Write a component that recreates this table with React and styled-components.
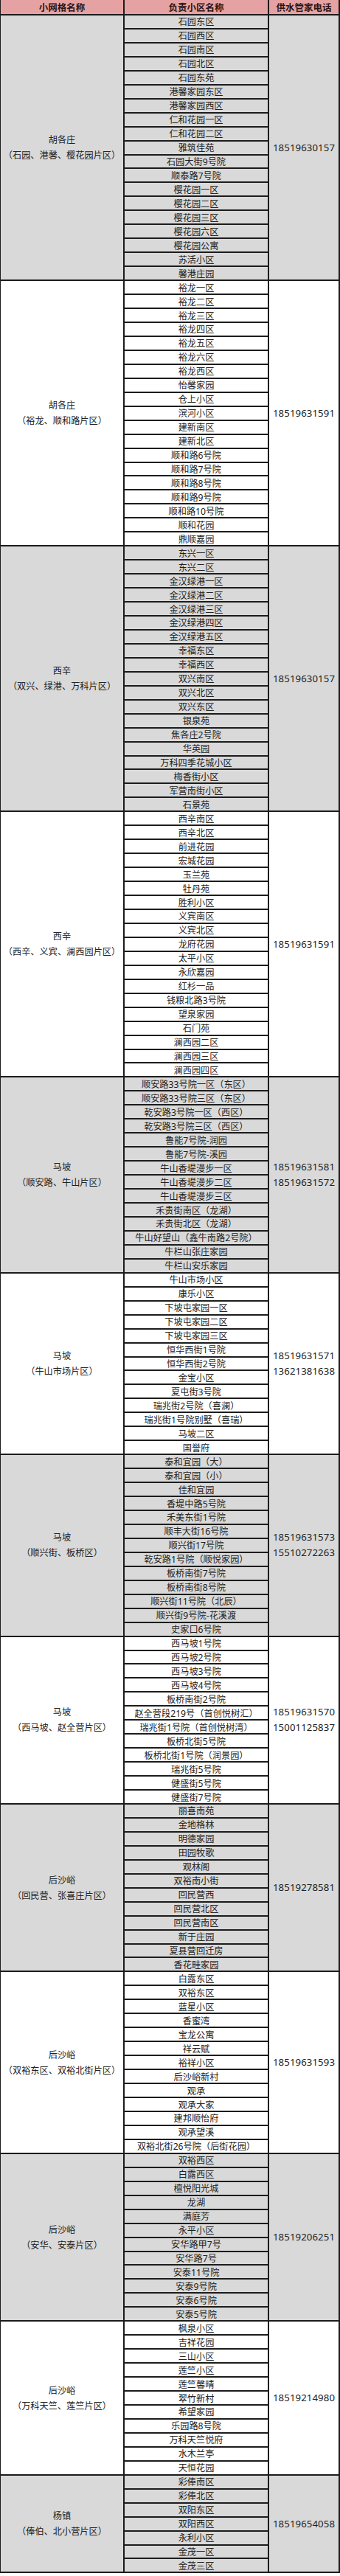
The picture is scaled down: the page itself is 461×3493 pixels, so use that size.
import React from "react";
import styled, { createGlobalStyle } from "styled-components";

const GlobalStyle = createGlobalStyle`
  html, body { margin: 0; padding: 0; background: #ffffff; }
  body { font-family: "Noto Sans", "Noto Sans CJK SC", sans-serif; }
`;

const LINE = "#1c1c1c";
const ITEM_H = 16.967;

const Table = styled.div`
  width: 461px;
  box-sizing: border-box;
  display: flex;
  flex-direction: column;
  gap: 2px;
  background: ${LINE};
  padding: 0 2px 2px 1px;
  color: #222;
`;

const Cols = `
  display: grid;
  grid-template-columns: 166px 194px 94px;
  column-gap: 2px;
`;

const HeaderRow = styled.div`
  ${Cols}
  height: 19px;
`;

const HeaderCell = styled.div`
  background: #e6a2a2;
  display: flex;
  align-items: center;
  justify-content: center;
  font-family: "Noto Sans CJK SC", sans-serif;
  font-weight: 700;
  font-size: 12.5px;
  color: #2a1414;
  white-space: nowrap;
`;

const Group = styled.div`
  ${Cols}
`;

const Cell = styled.div`
  background: ${(p) => (p.$shaded ? "#d9d9d9" : "#ffffff")};
  display: flex;
  flex-direction: column;
  align-items: center;
  justify-content: center;
  text-align: center;
  white-space: nowrap;
`;

const NameCell = styled(Cell)`
  font-size: 12.2px;
  line-height: 21px;
`;

const PhoneCell = styled(Cell)`
  font-family: "Noto Sans", sans-serif;
  font-size: 13.2px;
  line-height: 21px;
  letter-spacing: 0.1px;
`;

const ItemList = styled.div`
  display: flex;
  flex-direction: column;
  gap: 2px;
`;

const Item = styled.div`
  height: ${ITEM_H}px;
  background: ${(p) => (p.$shaded ? "#d9d9d9" : "#ffffff")};
  display: flex;
  align-items: center;
  justify-content: center;
  font-size: 12.2px;
  white-space: nowrap;
  overflow: hidden;
`;

const groups = [
  {
    name: "胡各庄",
    area: "（石园、港馨、樱花园片区）",
    phones: ["18519630157"],
    items: ["石园东区", "石园西区", "石园南区", "石园北区", "石园东苑", "港馨家园东区", "港馨家园西区", "仁和花园一区", "仁和花园二区", "雅筑佳苑", "石园大街9号院", "顺泰路7号院", "樱花园一区", "樱花园二区", "樱花园三区", "樱花园六区", "樱花园公寓", "苏活小区", "馨港庄园"],
  },
  {
    name: "胡各庄",
    area: "（裕龙、顺和路片区）",
    phones: ["18519631591"],
    items: ["裕龙一区", "裕龙二区", "裕龙三区", "裕龙四区", "裕龙五区", "裕龙六区", "裕龙西区", "怡馨家园", "仓上小区", "滨河小区", "建新南区", "建新北区", "顺和路6号院", "顺和路7号院", "顺和路8号院", "顺和路9号院", "顺和路10号院", "顺和花园", "鼎顺嘉园"],
  },
  {
    name: "西辛",
    area: "（双兴、绿港、万科片区）",
    phones: ["18519630157"],
    items: ["东兴一区", "东兴二区", "金汉绿港一区", "金汉绿港二区", "金汉绿港三区", "金汉绿港四区", "金汉绿港五区", "幸福东区", "幸福西区", "双兴南区", "双兴北区", "双兴东区", "银泉苑", "焦各庄2号院", "华英园", "万科四季花城小区", "梅香街小区", "军营南街小区", "石景苑"],
  },
  {
    name: "西辛",
    area: "（西辛、义宾、澜西园片区）",
    phones: ["18519631591"],
    items: ["西辛南区", "西辛北区", "前进花园", "宏城花园", "玉兰苑", "牡丹苑", "胜利小区", "义宾南区", "义宾北区", "龙府花园", "太平小区", "永欣嘉园", "红杉一品", "钱粮北路3号院", "望泉家园", "石门苑", "澜西园二区", "澜西园三区", "澜西园四区"],
  },
  {
    name: "马坡",
    area: "（顺安路、牛山片区）",
    phones: ["18519631581", "18519631572"],
    items: ["顺安路33号院一区（东区）", "顺安路33号院三区（东区）", "乾安路3号院一区（西区）", "乾安路3号院三区（西区）", "鲁能7号院-润园", "鲁能7号院-溪园", "牛山香堤漫步一区", "牛山香堤漫步二区", "牛山香堤漫步三区", "禾贵街南区（龙湖）", "禾贵街北区（龙湖）", "牛山好望山（鑫牛南路2号院）", "牛栏山张庄家园", "牛栏山安乐家园"],
  },
  {
    name: "马坡",
    area: "（牛山市场片区）",
    phones: ["18519631571", "13621381638"],
    items: ["牛山市场小区", "康乐小区", "下坡屯家园一区", "下坡屯家园二区", "下坡屯家园三区", "恒华西街1号院", "恒华西街2号院", "金宝小区", "夏屯街3号院", "瑞兆街2号院（喜澜）", "瑞兆街1号院别墅（喜瑞）", "马坡二区", "国誉府"],
  },
  {
    name: "马坡",
    area: "（顺兴街、板桥区）",
    phones: ["18519631573", "15510272263"],
    items: ["泰和宜园（大）", "泰和宜园（小）", "佳和宜园", "香堤中路5号院", "禾美东街1号院", "顺丰大街16号院", "顺兴街17号院", "乾安路1号院（顺悦家园）", "板桥南街7号院", "板桥南街8号院", "顺兴街11号院（北辰）", "顺兴街9号院-花溪渡", "史家口6号院"],
  },
  {
    name: "马坡",
    area: "（西马坡、赵全营片区）",
    phones: ["18519631570", "15001125837"],
    items: ["西马坡1号院", "西马坡2号院", "西马坡3号院", "西马坡4号院", "板桥南街2号院", "赵全营段219号（首创悦树汇）", "瑞兆街1号院（首创悦树湾）", "板桥北街5号院", "板桥北街1号院（润景园）", "瑞兆街5号院", "健盛街5号院", "健盛街7号院"],
  },
  {
    name: "后沙峪",
    area: "（回民营、张喜庄片区）",
    phones: ["18519278581"],
    items: ["丽喜南苑", "金地格林", "明德家园", "田园牧歌", "观林阁", "双裕南小街", "回民营西", "回民营北区", "回民营南区", "新于庄园", "夏县营回迁房", "香花畦家园"],
  },
  {
    name: "后沙峪",
    area: "（双裕东区、双裕北街片区）",
    phones: ["18519631593"],
    items: ["白露东区", "双裕东区", "蓝星小区", "香蜜湾", "宝龙公寓", "祥云赋", "裕祥小区", "后沙峪新村", "观承", "观承大家", "建邦顺怡府", "观承望溪", "双裕北街26号院（后街花园）"],
  },
  {
    name: "后沙峪",
    area: "（安华、安泰片区）",
    phones: ["18519206251"],
    items: ["双裕西区", "白露西区", "檀悦阳光城", "龙湖", "满庭芳", "永平小区", "安华路甲7号", "安华路7号", "安泰11号院", "安泰9号院", "安泰6号院", "安泰5号院"],
  },
  {
    name: "后沙峪",
    area: "（万科天竺、莲竺片区）",
    phones: ["18519214980"],
    items: ["枫泉小区", "吉祥花园", "三山小区", "莲竺小区", "莲竺馨晴", "翠竹新村", "希望家园", "乐园路8号院", "万科天竺悦府", "水木兰亭", "天恒花园"],
  },
  {
    name: "杨镇",
    area: "（俸伯、北小营片区）",
    phones: ["18519654058"],
    items: ["彩俸南区", "彩俸北区", "双阳东区", "双阳西区", "永利小区", "金茂一区", "金茂三区"],
  },
];

export default function App() {
  return (
    <>
      <GlobalStyle />
      <Table>
        <HeaderRow>
          <HeaderCell>小网格名称</HeaderCell>
          <HeaderCell>负责小区名称</HeaderCell>
          <HeaderCell>供水管家电话</HeaderCell>
        </HeaderRow>
        {groups.map((g, gi) => {
          const shaded = gi % 2 === 0;
          return (
            <Group key={gi}>
              <NameCell $shaded={shaded}>
                <span>{g.name}</span>
                <span>{g.area}</span>
              </NameCell>
              <ItemList>
                {g.items.map((it, ii) => (
                  <Item key={ii} $shaded={shaded}>
                    {it}
                  </Item>
                ))}
              </ItemList>
              <PhoneCell $shaded={shaded}>
                {g.phones.map((p) => (
                  <span key={p}>{p}</span>
                ))}
              </PhoneCell>
            </Group>
          );
        })}
      </Table>
    </>
  );
}
